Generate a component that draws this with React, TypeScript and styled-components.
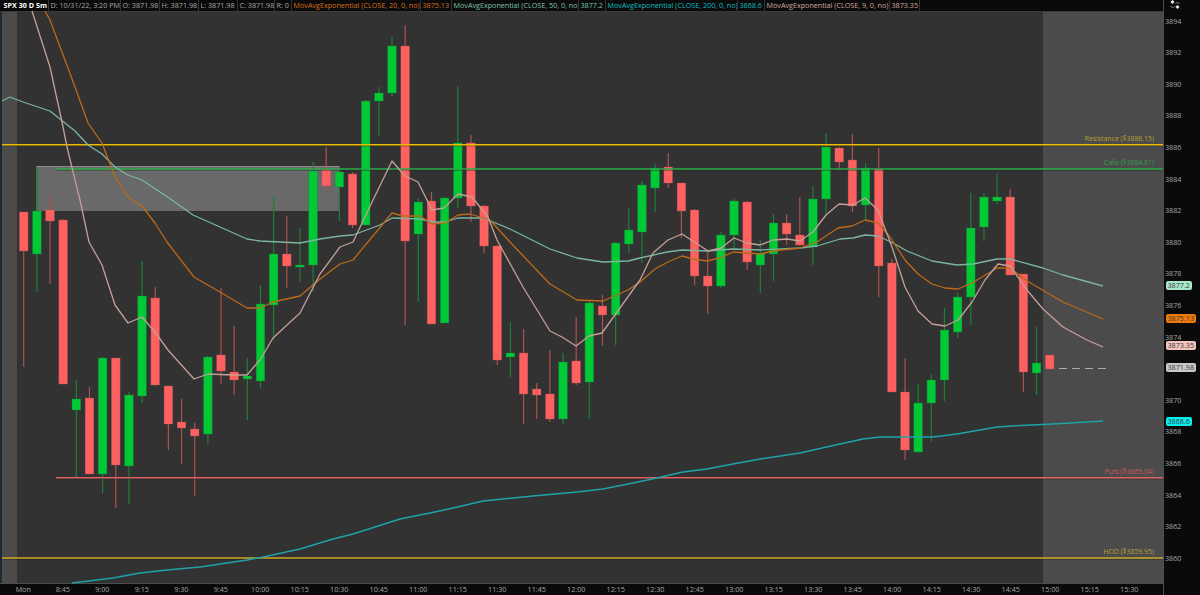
import React from 'react';
import styled, { createGlobalStyle } from 'styled-components';

type Candle = [number, number, number, number];

// wick top, body top, body bottom, wick bottom (pixels on the chart). up = green
const CANDLES: { up: boolean; c: Candle }[] = [
  { up: false, c: [212, 212, 251, 367] },
  { up: true, c: [167, 211, 254, 292] },
  { up: false, c: [194, 210, 221, 284] },
  { up: false, c: [219, 220, 384, 384] },
  { up: true, c: [380, 399, 410, 477] },
  { up: false, c: [387, 398, 474, 474] },
  { up: true, c: [357, 358, 474, 493] },
  { up: false, c: [358, 358, 465, 508] },
  { up: true, c: [392, 395, 466, 504] },
  { up: true, c: [261, 296, 396, 403] },
  { up: false, c: [287, 298, 385, 385] },
  { up: false, c: [386, 386, 424, 450] },
  { up: false, c: [399, 422, 428, 464] },
  { up: false, c: [423, 429, 436, 496] },
  { up: true, c: [356, 357, 434, 445] },
  { up: false, c: [288, 355, 371, 384] },
  { up: false, c: [326, 372, 380, 395] },
  { up: true, c: [358, 376, 379, 420] },
  { up: true, c: [285, 304, 381, 388] },
  { up: true, c: [196, 254, 305, 340] },
  { up: false, c: [216, 254, 266, 288] },
  { up: true, c: [228, 265, 266, 282] },
  { up: true, c: [162, 171, 265, 292] },
  { up: false, c: [147, 170, 186, 191] },
  { up: true, c: [172, 172, 187, 221] },
  { up: false, c: [172, 174, 225, 228] },
  { up: true, c: [100, 101, 225, 225] },
  { up: true, c: [87, 93, 101, 136] },
  { up: true, c: [37, 46, 93, 97] },
  { up: false, c: [25, 46, 241, 325] },
  { up: true, c: [198, 202, 234, 302] },
  { up: false, c: [192, 201, 324, 324] },
  { up: true, c: [197, 198, 323, 323] },
  { up: true, c: [86, 143, 198, 208] },
  { up: false, c: [135, 143, 206, 222] },
  { up: false, c: [205, 206, 246, 253] },
  { up: false, c: [245, 246, 360, 365] },
  { up: true, c: [322, 353, 357, 377] },
  { up: false, c: [329, 353, 394, 424] },
  { up: false, c: [383, 389, 395, 419] },
  { up: false, c: [350, 394, 419, 422] },
  { up: true, c: [353, 362, 419, 424] },
  { up: false, c: [317, 361, 383, 385] },
  { up: true, c: [301, 303, 382, 419] },
  { up: false, c: [295, 306, 315, 346] },
  { up: true, c: [242, 243, 315, 345] },
  { up: true, c: [208, 230, 244, 253] },
  { up: true, c: [181, 185, 232, 263] },
  { up: true, c: [164, 168, 188, 212] },
  { up: false, c: [153, 167, 183, 188] },
  { up: false, c: [183, 183, 211, 238] },
  { up: false, c: [209, 210, 276, 285] },
  { up: false, c: [250, 276, 286, 314] },
  { up: true, c: [232, 235, 286, 288] },
  { up: true, c: [199, 201, 235, 250] },
  { up: false, c: [201, 202, 262, 270] },
  { up: true, c: [240, 253, 265, 293] },
  { up: true, c: [214, 223, 254, 281] },
  { up: false, c: [214, 223, 234, 245] },
  { up: false, c: [197, 235, 245, 246] },
  { up: true, c: [186, 199, 247, 265] },
  { up: true, c: [133, 147, 199, 215] },
  { up: false, c: [147, 148, 162, 170] },
  { up: false, c: [134, 160, 206, 212] },
  { up: true, c: [163, 168, 205, 220] },
  { up: false, c: [148, 169, 266, 297] },
  { up: false, c: [259, 263, 392, 392] },
  { up: false, c: [358, 392, 450, 460] },
  { up: true, c: [384, 403, 452, 452] },
  { up: true, c: [374, 380, 403, 442] },
  { up: true, c: [308, 330, 380, 401] },
  { up: true, c: [293, 297, 332, 338] },
  { up: true, c: [193, 228, 297, 325] },
  { up: true, c: [193, 197, 227, 241] },
  { up: true, c: [174, 197, 201, 204] },
  { up: false, c: [189, 197, 275, 275] },
  { up: false, c: [274, 274, 372, 392] },
  { up: true, c: [327, 363, 373, 395] },
  { up: false, c: [355, 355, 369, 369] },
];

const AVERAGES = [
  {
    color: '#1fa3a8',
    width: 1.5,
    points:
      '72,583 113,578 140,573 167,570 200,567 247,560 263,557 300,549 333,539 353,534 400,519 430,513 453,508 483,501 533,496 577,492 603,489 633,483 657,478 683,472 707,469 733,464 760,459 800,453 840,444 863,439 880,437 933,437 957,434 997,427 1013,426 1053,424 1103,421',
  },
  {
    color: '#7bb5a0',
    width: 1.3,
    points:
      '2,101 10,97 23,102 50,111 75,131 88,145 102,154 115,167 128,175 142,180 172,200 193,215 220,227 247,239 260,241 300,243 320,239 340,236 353,235 380,225 392,218 420,219 433,222 445,222 458,218 483,218 510,229 550,249 577,258 603,262 628,261 640,258 667,252 682,250 707,251 733,249 760,250 800,248 817,246 840,239 853,238 865,235 878,236 893,243 907,251 932,261 957,265 973,264 997,259 1010,259 1043,268 1063,275 1103,286',
  },
  {
    color: '#bd6a18',
    width: 1.3,
    points:
      '45,11 50,20 75,87 88,123 102,143 115,177 128,197 142,206 155,223 167,242 194,277 220,292 247,308 260,308 273,302 300,296 320,279 340,264 353,260 392,213 403,216 420,216 432,224 445,223 458,215 470,214 490,220 510,242 550,284 577,300 603,301 628,290 640,282 655,269 668,262 682,256 693,259 707,261 720,258 733,252 760,254 773,251 800,248 817,242 838,228 852,226 865,220 878,223 890,237 905,260 918,274 932,284 945,288 958,289 972,283 997,268 1010,268 1027,281 1063,302 1103,319',
  },
  {
    color: '#c4a097',
    width: 1.3,
    points:
      '32,11 50,67 62,122 67,147 75,180 80,200 89,242 102,265 115,305 128,323 142,317 155,332 168,350 194,379 208,374 233,375 247,375 260,360 273,338 287,325 300,313 320,274 340,247 353,242 373,200 392,161 405,176 418,182 432,210 444,208 458,194 472,197 488,217 497,240 523,287 550,331 562,337 576,346 589,336 602,333 640,280 653,253 668,240 682,234 708,251 721,248 734,238 747,243 760,245 773,240 787,239 800,241 813,232 826,215 839,204 853,205 865,198 878,210 892,247 905,287 918,311 932,324 945,326 958,320 972,302 985,280 998,264 1010,266 1027,290 1043,309 1063,327 1087,340 1103,347',
  },
];

const LEVELS = [
  { label: 'Resistance ($3886.15)', y: 144.7, from: 2, line: '#eabb00', text: '#b8a030' },
  { label: 'Calls ($3884.61)', y: 169, from: 56, line: '#2aab48', text: '#32a04a' },
  { label: 'Puts ($3865.04)', y: 477.7, from: 56, line: '#e06160', text: '#cf5a5a' },
  { label: 'HOD ($3859.95)', y: 558, from: 2, line: '#cfa81f', text: '#bba030' },
];

const LEGEND = [
  { text: 'SPX 30 D 5m', color: '#ffffff', w: 47, bold: true },
  { text: 'D: 10/31/22, 3:20 PM', color: '#a8a8a8', w: 72 },
  { text: 'O: 3871.98', color: '#a8a8a8', w: 39 },
  { text: 'H: 3871.98', color: '#a8a8a8', w: 39 },
  { text: 'L: 3871.98', color: '#a8a8a8', w: 39 },
  { text: 'C: 3871.98', color: '#a8a8a8', w: 37 },
  { text: 'R: 0', color: '#a8a8a8', w: 17 },
  { text: 'MovAvgExponential (CLOSE, 20, 0, no)', color: '#d9701a', w: 129 },
  { text: '3875.13', color: '#d9701a', w: 31 },
  { text: 'MovAvgExponential (CLOSE, 50, 0, no)', color: '#7fc4a6', w: 127 },
  { text: '3877.2', color: '#7fc4a6', w: 27 },
  { text: 'MovAvgExponential (CLOSE, 200, 0, no)', color: '#12bcc4', w: 132 },
  { text: '3868.6', color: '#12bcc4', w: 27 },
  { text: 'MovAvgExponential (CLOSE, 9, 0, no)', color: '#d4a8a0', w: 125 },
  { text: '3873.35', color: '#d4a8a0', w: 30 },
];

const PRICES = [
  '3894', '3892', '3890', '3888', '3886', '3884', '3882', '3880', '3878',
  '3876', '3874', '', '3870', '3868', '3866', '3864', '3862', '3860',
];

const PILLS = [
  { text: '3877.2', y: 285, bg: '#a6e8c9' },
  { text: '3875.13', y: 318, bg: '#ee7a0a' },
  { text: '3873.35', y: 345.5, bg: '#f4c5bc' },
  { text: '3871.98', y: 367.5, bg: '#c9c9c9' },
  { text: '3868.6', y: 421, bg: '#06eeee' },
];

const TIMES = [
  'Mon', '8:45', '9:00', '9:15', '9:30', '9:45', '10:00', '10:15', '10:30', '10:45',
  '11:00', '11:15', '11:30', '11:45', '12:00', '12:15', '12:30', '12:45', '13:00',
  '13:15', '13:30', '13:45', '14:00', '14:15', '14:30', '14:45', '15:00', '15:15', '15:30',
];

const candleX = (i: number) => 23.7 + i * 13.154;

const App = () => {
  return (
    <Page>
      <GlobalStyle />
      <Main>
        <LegendBar>
          {LEGEND.map((item) => (
            <LegendChip key={item.text} $width={item.w} $color={item.color} $bold={item.bold}>
              {item.text}
            </LegendChip>
          ))}
        </LegendBar>
        <Plot>
          <Edge />
          <AfterHours $width={15} />
          <Session />
          <AfterHours $width={120} />
          <ChartSvg viewBox="0 0 1163 584">
            <rect x="36.5" y="166" width="303" height="45" fill="#ffffff" fillOpacity="0.27" />
            <line x1="36.5" y1="166.5" x2="339.5" y2="166.5" stroke="#8a8a8a" />
            <line x1="36.5" y1="167" x2="36.5" y2="211" stroke="#27a243" />
            <line x1="339.5" y1="166" x2="339.5" y2="211" stroke="#27a243" strokeOpacity="0.5" />
            {CANDLES.map(({ up, c }, i) => {
              const x = candleX(i);
              return (
                <g key={i}>
                  <line
                    x1={x}
                    x2={x}
                    y1={c[0]}
                    y2={c[3]}
                    stroke={up ? '#1f7f3a' : '#ad5252'}
                    strokeWidth="1.2"
                  />
                  <rect
                    x={x - 4.3}
                    y={c[1]}
                    width="8.6"
                    height={Math.max(c[2] - c[1], 2)}
                    fill={up ? '#00c936' : '#ff6060'}
                    stroke={up ? '#1f7f3a' : '#ad5252'}
                    strokeWidth="0.4"
                  />
                </g>
              );
            })}
            {LEVELS.map((level) => (
              <g key={level.label}>
                <line x1={level.from} x2="1163" y1={level.y + 1.2} y2={level.y + 1.2} stroke="#222" strokeOpacity="0.5" />
                <line x1={level.from} x2="1163" y1={level.y} y2={level.y} stroke={level.line} strokeWidth="1.6" />
                <LevelText x="1154" y={level.y - 4} fill={level.text} textAnchor="end">
                  {level.label}
                </LevelText>
              </g>
            ))}
            {AVERAGES.map((avg) => (
              <polyline
                key={avg.color}
                points={avg.points}
                fill="none"
                stroke={avg.color}
                strokeWidth={avg.width}
                strokeLinejoin="round"
              />
            ))}
            <line x1="1059" x2="1107" y1="368.5" y2="368.5" stroke="#a9a9a9" strokeDasharray="8 5" />
          </ChartSvg>
        </Plot>
      </Main>
      <PriceAxis>
        <ExpandIcon viewBox="0 0 10 10">
          <rect x="1" y="0.5" width="3" height="3" fill="#e8e8e8" transform="rotate(45 2.5 2)" />
          <rect x="6" y="5.5" width="3" height="3" fill="#e8e8e8" transform="rotate(45 7.5 7)" />
          <path d="M0.5 6 C2 8 3 8 4.5 6.5 M5.5 3.5 C7 2 8 2 9.5 4" stroke="#bbb" strokeWidth="0.7" fill="none" />
        </ExpandIcon>
        {PRICES.map((price, i) => (
          <PriceLabel key={i}>{price}</PriceLabel>
        ))}
        {PILLS.map((pill) => (
          <PricePill key={pill.text} $top={pill.y} $bg={pill.bg}>
            {pill.text}
          </PricePill>
        ))}
      </PriceAxis>
      <TimeAxis>
        {TIMES.map((time) => (
          <TimeLabel key={time}>{time}</TimeLabel>
        ))}
      </TimeAxis>
    </Page>
  );
};

export default App;

const GlobalStyle = createGlobalStyle`
  html, body {
    margin: 0;
    padding: 0;
    background: #0a0a0a;
    overflow: hidden;
  }
`;

const Page = styled.div`
  width: 1200px;
  height: 595px;
  display: grid;
  grid-template-columns: 1163px 37px;
  grid-template-rows: 584px 11px;
  background: #0a0a0a;
  font-family: 'Open Sans', 'Liberation Sans', sans-serif;
  overflow: hidden;
`;

const Main = styled.div`
  display: flex;
  flex-direction: column;
  min-width: 0;
  border-bottom: 1px solid #4e4e4e;
  box-sizing: border-box;
`;

const LegendBar = styled.div`
  height: 12px;
  flex: none;
  display: flex;
  padding-left: 2px;
  box-sizing: border-box;
  background: #0a0a0a;
  border-bottom: 1px solid #3a3a3a;
`;

const LegendChip = styled.div<{ $width: number; $color: string; $bold?: boolean }>`
  width: ${({ $width }) => $width}px;
  flex: none;
  box-sizing: border-box;
  padding-left: 1.5px;
  border-right: 1px solid #333333;
  color: ${({ $color }) => $color};
  font-size: 7.2px;
  font-weight: ${({ $bold }) => ($bold ? 700 : 400)};
  line-height: 11px;
  white-space: nowrap;
  overflow: hidden;
`;

const Plot = styled.div`
  flex: 1;
  position: relative;
  display: flex;
  min-height: 0;
`;

const Edge = styled.div`
  width: 2px;
  background: #1c2a33;
`;

const AfterHours = styled.div<{ $width: number }>`
  width: ${({ $width }) => $width}px;
  background: #4b4b4b;
`;

const Session = styled.div`
  flex: 1;
  background: #323232;
`;

const ChartSvg = styled.svg`
  position: absolute;
  left: 0;
  top: -12px;
  width: 1163px;
  height: 584px;
  overflow: hidden;
`;

const LevelText = styled.text`
  font-size: 6.9px;
  font-family: 'Open Sans', 'Liberation Sans', sans-serif;
`;

const PriceAxis = styled.div`
  position: relative;
  display: flex;
  flex-direction: column;
  padding-top: 5.7px;
  box-sizing: border-box;
  border-left: 1px solid #4e4e4e;
  grid-row: 1 / span 2;
  grid-column: 2;
`;

const PriceLabel = styled.div`
  height: 31.6px;
  flex: none;
  padding-left: 1px;
  color: #a6a6a6;
  font-size: 7.2px;
  line-height: 31.6px;
`;

const PricePill = styled.div<{ $top: number; $bg: string }>`
  position: absolute;
  left: 1.5px;
  top: ${({ $top }) => $top - 4.5}px;
  height: 9px;
  padding: 0 2px;
  border-radius: 2px;
  background: ${({ $bg }) => $bg};
  color: #3a3a3a;
  font-size: 7.2px;
  line-height: 9px;
`;

const ExpandIcon = styled.svg`
  position: absolute;
  left: 6px;
  top: 0;
  width: 10px;
  height: 10px;
`;

const TimeAxis = styled.div`
  grid-row: 2;
  grid-column: 1;
  display: flex;
  padding-left: 3.5px;
  box-sizing: border-box;
  background: #0a0a0a;
`;

const TimeLabel = styled.div`
  width: 39.5px;
  flex: none;
  text-align: center;
  color: #a6a6a6;
  font-size: 7.2px;
  line-height: 11px;
`;
